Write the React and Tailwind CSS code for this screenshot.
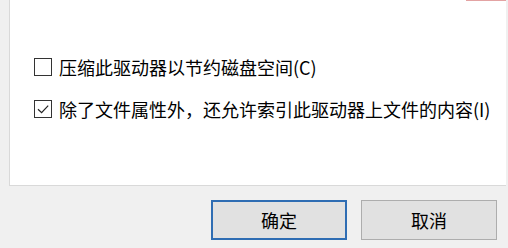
import React from 'react';

const font = { fontFamily: '"Noto Sans CJK SC", "Noto Sans", sans-serif' };

const Check = ({ checked }) => (
  <div className="w-[18px] h-[18px] shrink-0 border border-[#333333] bg-white relative">
    {checked && (
      <svg className="absolute left-0 top-0" width="16" height="16" viewBox="0 0 16 16">
        <path d="M3 8.2 L6.6 11.6 L13.2 4.6" fill="none" stroke="#222" strokeWidth="1.2" />
      </svg>
    )}
  </div>
);

export default function App() {
  return (
    <div className="w-[508px] h-[248px] bg-[#f0f0f0] overflow-hidden text-[#000]" style={font}>
      <div className="ml-[9px] w-[497px] h-[186px] bg-white border-l border-b border-[#d9d9d9] flex flex-col">
        <div className="h-px w-[40px] ml-auto bg-[#e3a3a3]" />
        <div className="pl-[24px] pt-[57px] flex flex-col gap-[24px]">
          <div className="flex items-center gap-[7px] text-[18px] leading-[16px]">
            <Check />
            <span>压缩此驱动器以节约磁盘空间(C)</span>
          </div>
          <div className="flex items-center gap-[7px] text-[18px] leading-[16px]">
            <Check checked />
            <span>除了文件属性外，还允许索引此驱动器上文件的内容(I)</span>
          </div>
        </div>
      </div>
      <div className="flex justify-end gap-[14px] pr-[11px] pt-[14px]">
        <button className="w-[136px] h-[40px] bg-[#e1e1e1] border-2 border-[#2f6db3] text-[18px] leading-none">确定</button>
        <button className="w-[136px] h-[40px] bg-[#e1e1e1] border border-[#adadad] text-[18px] leading-none">取消</button>
      </div>
    </div>
  );
}
